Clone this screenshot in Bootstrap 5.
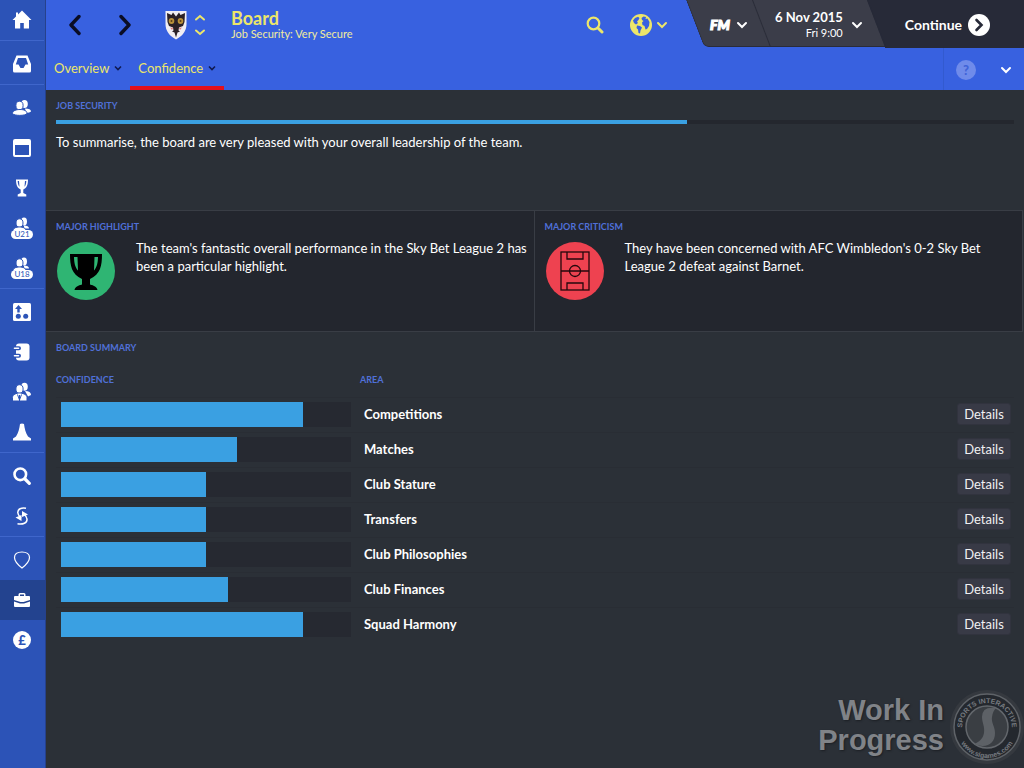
<!DOCTYPE html>
<html lang="en">
<head>
<meta charset="utf-8">
<meta name="viewport" content="width=device-width, initial-scale=1">
<title>Board – Confidence</title>
<link href="https://cdn.jsdelivr.net/npm/bootstrap@5.3.0/dist/css/bootstrap.min.css" rel="stylesheet">
<style>
:root{--blue:#3861e0;--side:#2c53b7;--panel:#2b3037;--deep:#23262e;--line:#393d45;--label:#5070d8;--yel:#ece66a;--bar:#3aa0e2}
body{background:var(--panel);color:#fff;font-family:"Lato","Open Sans",sans-serif;font-size:13px;line-height:18px}
button{background:none;border:0;color:inherit;padding:0}
svg{display:block}
.sidebar{width:46px;padding-right:1px;background:var(--side);border-right:1px solid #26418c}
.side-group{display:flex;flex-direction:column;gap:6px;padding:6px 0 3px;border-bottom:1px solid #3f66cb}
.side-group:first-child{padding-top:3px}
.side-group:last-child{border:0}
.side-item{height:34px;display:flex;align-items:center;justify-content:center;color:#fff}
.side-item.active{height:40px;margin:-3px -1px -3px 0;padding-right:1px;background:#23438f}
.masthead{background:var(--blue)}
.topbar{height:48px}
.nav-block{padding:2px 0 0 23px}
.forward{margin-left:38px}
.crest{margin:0 7px 0 34px}
.club-name{padding-left:25px;padding-bottom:2px}
.club-title{font-size:18px;line-height:20px;font-weight:700;color:var(--yel);margin:0}
.club-sub{font-size:11px;line-height:12px;color:#f1ec9c;margin:0}
.finders{gap:26px;margin-right:18px;padding-top:2px}
.segment{position:relative;height:47px;isolation:isolate;display:flex;align-items:center;padding-top:2px}
.segment::before{content:"";position:absolute;z-index:-1;top:0;bottom:0;left:0;right:-30px;background:#3b3d49;border-left:1px solid #2a2c38;border-bottom:1px solid #2a2c38;transform:skewX(21deg);transform-origin:top;}
.seg-fm::before{border-bottom-left-radius:5px}
.seg-fm{padding-left:23px;padding-right:4px}
.seg-date{padding-left:23px;padding-right:4px;gap:8px}
.seg-go{padding-left:38px;padding-right:34px;gap:6px;height:48px;font-size:14px;font-weight:700}
.seg-go::before{background:#272a38;border-color:#272a38;right:-60px}
.dateline{font-size:13px;font-weight:700;line-height:17px}
.timeline{font-size:11px;line-height:14px}
.tabs{height:42px}
.tabs .tab{display:flex;align-items:center;gap:5px;color:var(--yel);font-size:13px;text-decoration:none;padding:2px 8px 0;border-bottom:4px solid transparent}
.tabs .tab.current{border-color:#e3101c}
.tools{border-left:1px solid #325acf;padding-top:2px}
.cap{font-size:9px;line-height:13px;font-weight:700;color:var(--label);margin:0;text-transform:uppercase}
.security{height:120px;padding:9px 10px}
.security .progress{height:4px;margin:8px 0 9px;border-radius:0;background:#24272e}
.progress-bar{background:var(--bar)}
.verdicts{background:var(--deep);border:1px solid var(--line);border-left:0;margin-right:1px}
.verdict{min-height:120px;padding:9px 0 9px 10px;flex:1 1 0;min-width:0}
.verdict+.verdict{border-left:1px solid var(--line)}
.verdict p{margin:0 0 0 20px;padding-top:6px}
.summary{padding:9px 10px}
.board{width:100%;table-layout:fixed}
.board th{padding:3px 0 0;height:27px;vertical-align:top}
.board td{height:35px;padding:0;vertical-align:middle}
.board td .progress{height:25px;margin:0 9px 0 5px;border-radius:0;background:#262931}
.board tbody tr{border-top:1px solid #292d34}
.board td.area{padding:0 0 2px 4px;font-weight:700}
.board td.act{padding-bottom:2px}
.col-conf{width:304px}.col-act{width:57px}
.details{display:block;background:#383a46;border:1px solid #31333e;border-radius:3px;width:54px;height:22px;line-height:18px;font-size:13px;color:#f0f0f2}
.wip{font:700 29px/30px "Liberation Sans",sans-serif;color:#808388;text-align:right;text-shadow:1px 1px 2px #1c1f24;margin:0;padding-bottom:4px}
</style>
</head>
<body>
<div class="d-flex min-vh-100">
<nav class="sidebar flex-shrink-0" aria-label="Main">
  <div class="side-group">
    <a href="#" class="side-item" aria-label="Home"><svg width="20" height="20" viewBox="0 0 20 20" fill="currentColor"><path d="M10 .5 19.500 10H17v8.500h-5.200V13H8.200v5.500H3V10H.5L4 6.500V2.500h2v2z"/></svg></a>
  </div>
  <div class="side-group">
    <a href="#" class="side-item" aria-label="Inbox"><svg width="20" height="18" viewBox="0 0 20 18"><path fill="#fff" fill-rule="evenodd" d="M4.500.5h11L19 9v7q0 1.500-1.500 1.500h-15Q1 17.500 1 16V9zM6 3 3.800 9.500h2.700L8.500 13h3l2-3.500h2.700L14 3z"/></svg></a>
  </div>
  <div class="side-group">
    <a href="#" class="side-item" aria-label="Squad"><svg width="20" height="18" viewBox="0 0 20 18"><g fill="#fff"><ellipse cx="12.500" cy="5" rx="3.300" ry="4"/><path d="M13 9.500c4 0 6 1.200 6 3-1 1-3 1.400-5 1.300z"/><g stroke="#2c53b7" stroke-width="1"><ellipse cx="7.500" cy="6.500" rx="3.600" ry="4.300"/><path d="M.5 14.500c0-3 4-4 7.500-4s7 1 7 4c-1.500 2.500-13 2.500-14.500 0z"/></g></g></svg></a>
    <a href="#" class="side-item" aria-label="Calendar"><svg width="18" height="18" viewBox="0 0 18 18"><path fill="#fff" fill-rule="evenodd" d="M2 0h14q2 0 2 2v14q0 2-2 2H2q-2 0-2-2V2q0-2 2-2zm0 6v9.500q0 .5.500.5h13q.5 0 .5-.5V6z"/></svg></a>
    <a href="#" class="side-item" aria-label="Competitions"><svg width="14" height="18" viewBox="0 0 14 18"><path fill="#fff" fill-rule="evenodd" d="M1 .5h12c0 5-1 8.500-4.700 10v3.500l3 1.500v2H2.700v-2l3-1.500v-3.500C2 9 1 5.500 1 .5zM2.700 2c.1 2.500.6 4.500 1.800 5.700L4 2zm8.600 0H10l-.5 5.700C10.700 6.500 11.200 4.500 11.300 2z"/></svg></a>
    <a href="#" class="side-item" aria-label="Under 21s"><svg width="24" height="24" viewBox="0 0 24 24"><g fill="#fff"><ellipse cx="14" cy="5.500" rx="3" ry="4"/><path d="M14 9.500c3 0 5 1 5 3h-5z"/><g stroke="#2c53b7"><ellipse cx="9.500" cy="7" rx="3.500" ry="4.200"/><path d="M3 15c0-3 3-4 6.500-4s6.500 1 6.500 4z"/></g><rect x="1" y="14" width="22" height="9" rx="4.500"/></g><text x="12" y="21" text-anchor="middle" font-size="8" fill="#2c53b7">U21</text></svg></a>
    <a href="#" class="side-item" aria-label="Under 18s"><svg width="24" height="24" viewBox="0 0 24 24"><g fill="#fff"><ellipse cx="14" cy="5.500" rx="3" ry="4"/><path d="M14 9.500c3 0 5 1 5 3h-5z"/><g stroke="#2c53b7"><ellipse cx="9.500" cy="7" rx="3.500" ry="4.200"/><path d="M3 15c0-3 3-4 6.500-4s6.500 1 6.500 4z"/></g><rect x="1" y="14" width="22" height="9" rx="4.500"/></g><text x="12" y="21" text-anchor="middle" font-size="8" fill="#2c53b7">U18</text></svg></a>
  </div>
  <div class="side-group">
    <a href="#" class="side-item" aria-label="Tactics"><svg width="18" height="18" viewBox="0 0 18 18"><rect width="18" height="18" rx="1.500" fill="#fff"/><g fill="#2c53b7"><path d="M5.500 2 9 6H6.700v3.500H4.300V6H2z"/><circle cx="5.300" cy="13.300" r="2.500"/><circle cx="12.700" cy="13.300" r="2.500"/></g></svg></a>
    <a href="#" class="side-item" aria-label="Notebook"><svg width="18" height="18" viewBox="0 0 18 18"><rect x="3" y=".5" width="13.500" height="17" rx="3" fill="#fff"/><path d="M1.500 5.200h4.500M1.500 12.800h4.500" stroke="#2c53b7" stroke-width="4" stroke-linecap="round"/><path d="M1.500 5.200h4M1.500 12.800h4" stroke="#fff" stroke-width="1.600" stroke-linecap="round"/></svg></a>
    <a href="#" class="side-item" aria-label="Staff"><svg width="20" height="20" viewBox="0 0 20 20"><g fill="#fff"><ellipse cx="12.500" cy="4.800" rx="3.300" ry="4"/><path d="M13 9c4 0 6 1.500 6 4l-3 1.500z"/><g stroke="#2c53b7"><ellipse cx="7.500" cy="7" rx="3.600" ry="4.300"/><path d="M.5 19v-3.500c0-3 4-4.500 7-4.500s7.500 1.500 7.500 4.500V19z"/></g></g><path d="m5.500 12.500 2 5.500 2-5.500M7.500 13v6" stroke="#2c53b7" stroke-width="1" fill="none"/></svg></a>
    <a href="#" class="side-item" aria-label="Training"><svg width="18" height="18" viewBox="0 0 18 18"><path fill="#fff" d="M7 1q2-1 4 0c.5 4.500 1.800 9 4 12.500L18 15.500V17.500H0v-2l3-2C5.200 10 6.500 5.500 7 1z"/></svg></a>
  </div>
  <div class="side-group">
    <a href="#" class="side-item" aria-label="Scouting"><svg width="18" height="18" viewBox="0 0 18 18" fill="none" stroke="#fff"><circle cx="7.300" cy="7.300" r="5.800" stroke-width="2.600"/><path d="m12 12 4.300 4.300" stroke-width="3.200" stroke-linecap="round"/></svg></a>
    <a href="#" class="side-item" aria-label="Transfers"><svg width="14" height="18" viewBox="0 0 14 18" fill="none" stroke="#fff" stroke-width="1.500"><path d="M11 1.200C6.500.3 2.500 2 2.800 5.800 3 8.300 4.500 9.500 6 11"/><path d="M2.500 16.800C8 17.700 12.300 16 12 12c-.2-2.200-1.500-3.500-3-5"/><path d="M.5 10.500 6.500 14V8zM13 7.500 7 4v6z" fill="#fff" stroke="none"/></svg></a>
  </div>
  <div class="side-group">
    <a href="#" class="side-item" aria-label="Club"><svg width="18" height="18" viewBox="0 0 18 18"><path fill="none" stroke="#fff" stroke-width="1.200" d="M9 17C4.500 13.500 1.500 10 1.500 6.500 1.500 3 4.500 1 9 1s7.500 2 7.500 5.500C16.500 10 13.500 13.500 9 17z"/></svg></a>
    <a href="#" class="side-item active" aria-label="Board"><svg width="16" height="14" viewBox="0 0 16 14"><path fill="#fff" fill-rule="evenodd" d="M4.500 3V1.500Q4.500 0 6 0h4q1.500 0 1.500 1.500V3H15q1 0 1 1v3L9.500 9h-3L0 7V4q0-1 1-1zM6 3h4V1.500H6zM0 8.500l6 2h4l6-2V13q0 1-1 1H1q-1 0-1-1z"/></svg></a>
    <a href="#" class="side-item" aria-label="Finances"><svg width="18" height="18" viewBox="0 0 18 18"><circle cx="9" cy="9" r="9" fill="#fff"/><text x="9" y="13.500" text-anchor="middle" font-size="13" font-weight="900" fill="#2c53b7">£</text></svg></a>
  </div>
</nav>

<div class="flex-grow-1 d-flex flex-column overflow-hidden">
  <header class="masthead">
    <div class="topbar d-flex align-items-start overflow-hidden">
      <div class="nav-block d-flex align-items-center h-100">
        <button aria-label="Back"><svg width="12" height="22" viewBox="0 0 12 22" fill="none" stroke="#0a0d24" stroke-width="3.400" stroke-linecap="round" stroke-linejoin="round"><path d="M10 2.500 2 11l8 8.500"/></svg></button>
        <button class="forward" aria-label="Forward"><svg width="12" height="22" viewBox="0 0 12 22" fill="none" stroke="#0a0d24" stroke-width="3.400" stroke-linecap="round" stroke-linejoin="round"><path d="m2 2.500 8 8.500-8 8.500"/></svg></button>
        <svg class="crest" width="22" height="30" viewBox="0 0 22 30" role="img" aria-label="Club crest"><path d="M.5 1h21v13c0 7-4 12-10.500 15.500C4.500 26 .5 21 .5 14z" fill="#f1eef3"/><path d="M2 3 6.500 5 8 2.500l3 4 3-4L15.500 5 20 3l-.5 9-1.500 4-4 1.500-.5 3 1.500 1-2.500 1L11 27.500 9.500 22.500 7 21.500l1.500-1-.5-3L4 16l-1.500-4z" fill="#2a2026"/><ellipse cx="6.500" cy="11" rx="2.800" ry="3" fill="#b9913a"/><ellipse cx="15.500" cy="11" rx="2.800" ry="3" fill="#b9913a"/><circle cx="6.500" cy="11" r="1" fill="#5a3f1c"/><circle cx="15.500" cy="11" r="1" fill="#5a3f1c"/><path d="M5 17.500l3 .5-1 2zM17 17.500l-3 .5 1 2z" fill="#e07a78"/></svg>
        <button aria-label="Switch club"><svg width="12" height="22" viewBox="0 0 12 22" fill="none" stroke="#ece66a" stroke-width="2" stroke-linecap="round"><path d="M2 5.500 6 2l4 3.500M2 16.500 6 20l4-3.500"/></svg></button>
        <div class="club-name">
          <h1 class="club-title">Board</h1>
          <p class="club-sub">Job Security: Very Secure</p>
        </div>
      </div>
      <div class="finders d-flex align-items-center h-100 ms-auto">
        <button aria-label="Search"><svg width="18" height="18" viewBox="0 0 18 18" fill="none" stroke="#ece66a"><circle cx="7.500" cy="7.500" r="5.800" stroke-width="2.200"/><path d="m12.500 12.500 3.500 3.500" stroke-width="3" stroke-linecap="round"/></svg></button>
        <button class="d-flex align-items-center gap-1" aria-label="World"><svg width="22" height="22" viewBox="0 0 22 22"><circle cx="11" cy="11" r="11" fill="#ece66a"/><path fill="#3861e0" d="M3 6.500 5 4l3-1.200 1.500 1.200L8.500 6 7 7.500 8 9l-2 1.500L4 9zM11.500 4 13.500 2.500 16 3l-.5 2 2-.5 2 3.500-.5 4-2 3-1.500.5-1-3.500-2-1-.5-2.500 1.500-1.500-1.500-1zM7 11.500l3 .5 2 1.500-1.500 3-.5 3-1.500-.5-.5-3.500L6.500 14z"/></svg><svg width="12" height="8" viewBox="0 0 12 8" fill="none" stroke="#ece66a" stroke-width="2" stroke-linecap="round"><path d="m2 2 4 4 4-4"/></svg></button>
      </div>
      <button class="segment seg-fm" aria-label="FM menu"><svg width="27" height="18" viewBox="0 0 27 18"><text x="1" y="14" font-family="Lato" font-size="14" font-style="italic" font-weight="900" fill="#fff" stroke="#fff" stroke-width="1.200">FM</text></svg><svg width="12" height="8" viewBox="0 0 12 8" fill="none" stroke="#fff" stroke-width="2" stroke-linecap="round"><path d="m2 2 4 4 4-4"/></svg></button>
      <button class="segment seg-date"><span class="text-end"><span class="d-block dateline">6 Nov 2015</span><span class="d-block timeline">Fri 9:00</span></span><svg width="12" height="8" viewBox="0 0 12 8" fill="none" stroke="#fff" stroke-width="2" stroke-linecap="round"><path d="m2 2 4 4 4-4"/></svg></button>
      <button class="segment seg-go"><span>Continue</span><svg width="22" height="22" viewBox="0 0 22 22"><circle cx="11" cy="11" r="11" fill="#fff"/><path d="m8.500 6 5 5-5 5" fill="none" stroke="#272a38" stroke-width="2.600" stroke-linecap="round"/></svg></button>
    </div>
    <div class="tabs d-flex">
      <a href="#" class="tab">Overview <svg width="8" height="6" viewBox="0 0 8 6" fill="none" stroke="#101a50" stroke-width="1.600"><path d="m1 1.500 3 3 3-3"/></svg></a>
      <a href="#" class="tab current">Confidence <svg width="8" height="6" viewBox="0 0 8 6" fill="none" stroke="#101a50" stroke-width="1.600"><path d="m1 1.500 3 3 3-3"/></svg></a>
      <div class="tools ms-auto d-flex align-items-center ps-2 gap-4">
        <button class="ms-1" aria-label="Help"><svg width="20" height="20" viewBox="0 0 20 20"><circle cx="10" cy="10" r="10" fill="#6f8bea"/><text x="10" y="14.500" text-anchor="middle" font-size="13" font-weight="900" fill="#3f63d8">?</text></svg></button>
        <button class="me-2 pe-1" aria-label="More"><svg width="12" height="8" viewBox="0 0 12 8" fill="none" stroke="#fff" stroke-width="2" stroke-linecap="round"><path d="m2 2 4 4 4-4"/></svg></button>
      </div>
    </div>
  </header>

  <main>
    <section class="security">
      <h2 class="cap">Job Security</h2>
      <div class="progress"><div class="progress-bar" style="width:65.9%"></div></div>
      <p class="m-0">To summarise, the board are very pleased with your overall leadership of the team.</p>
    </section>
    <section class="verdicts d-flex">
      <div class="verdict">
        <h2 class="cap">Major Highlight</h2>
        <div class="d-flex">
          <svg class="flex-shrink-0 mt-2" width="60" height="60" viewBox="0 0 60 60"><circle cx="30" cy="30" r="29" fill="#2fb573"/><path fill="#000" fill-rule="evenodd" d="M14 13h32c0 12-1.500 20-12 25v5.500c4 1 7 2.500 7.500 5.500h-23c.5-3 3.500-4.500 7.500-5.500V38C15.500 33 14 25 14 13zm4 3c.2 6 1 10 4 13.500L21.500 16zm24 0h-3.500L38 29.500c3-3.500 3.800-7.500 4-13.500z"/></svg>
          <p>The team's fantastic overall performance in the Sky Bet League 2 has been a particular highlight.</p>
        </div>
      </div>
      <div class="verdict">
        <h2 class="cap">Major Criticism</h2>
        <div class="d-flex">
          <svg class="flex-shrink-0 mt-2" width="60" height="60" viewBox="0 0 60 60"><circle cx="30" cy="30" r="29" fill="#ee4250"/><g fill="none" stroke="#24080c" stroke-width="1.300"><rect x="16" y="11" width="28" height="38"/><path d="M16 30h28M22 11v7h16v-7M22 49v-7h16v7"/><circle cx="30" cy="30" r="5.500"/></g></svg>
          <p>They have been concerned with AFC Wimbledon's 0-2 Sky Bet League 2 defeat against Barnet.</p>
        </div>
      </div>
    </section>
    <section class="summary">
      <h2 class="cap mb-3">Board Summary</h2>
      <table class="board">
        <colgroup><col class="col-conf"><col><col class="col-act"></colgroup>
        <thead><tr><th class="cap">Confidence</th><th class="cap">Area</th><th></th></tr></thead>
        <tbody>
          <tr><td><div class="progress"><div class="progress-bar" style="width:83.4%"></div></div></td><td class="area">Competitions</td><td class="act"><button class="details">Details</button></td></tr>
          <tr><td><div class="progress"><div class="progress-bar" style="width:60.7%"></div></div></td><td class="area">Matches</td><td class="act"><button class="details">Details</button></td></tr>
          <tr><td><div class="progress"><div class="progress-bar" style="width:50%"></div></div></td><td class="area">Club Stature</td><td class="act"><button class="details">Details</button></td></tr>
          <tr><td><div class="progress"><div class="progress-bar" style="width:50%"></div></div></td><td class="area">Transfers</td><td class="act"><button class="details">Details</button></td></tr>
          <tr><td><div class="progress"><div class="progress-bar" style="width:50%"></div></div></td><td class="area">Club Philosophies</td><td class="act"><button class="details">Details</button></td></tr>
          <tr><td><div class="progress"><div class="progress-bar" style="width:57.6%"></div></div></td><td class="area">Club Finances</td><td class="act"><button class="details">Details</button></td></tr>
          <tr><td><div class="progress"><div class="progress-bar" style="width:83.4%"></div></div></td><td class="area">Squad Harmony</td><td class="act"><button class="details">Details</button></td></tr>
        </tbody>
      </table>
    </section>
  </main>
  <footer class="mt-auto d-flex justify-content-end align-items-center gap-1">
    <p class="wip">Work In<br>Progress</p>
    <svg width="76" height="82" viewBox="0 0 76 82" role="img" aria-label="Sports Interactive">
      <circle cx="39" cy="41" r="37" fill="#35393f"/><circle cx="39" cy="41" r="33" fill="#24282e" stroke="#5f6368" stroke-width="1.500"/><circle cx="39" cy="41" r="21" fill="#3a3e43" stroke="#63676c" stroke-width="1.500"/>
      <path d="M48 22q-14-2-14 9c0 6 3 9 2 16-1 6-5 9-10 11 12 5 21 0 21-11 0-7-4-10-3-16 .5-4 2-7 4-9z" fill="#5d6166"/>
      <defs><path id="arc-top" d="M17 54A25 25 0 1 1 61 54"/><path id="arc-low" d="M9 42a30 30 0 0 0 60 0"/></defs>
      <g font-family="Liberation Sans" font-weight="700" fill="#777b80" text-anchor="middle"><text font-size="7"><textPath href="#arc-top" startOffset="50%">SPORTS INTERACTIVE</textPath></text><text font-size="7"><textPath href="#arc-low" startOffset="50%">www.sigames.com</textPath></text></g>
    </svg>
  </footer>
</div>
</div>
<script src="https://cdn.jsdelivr.net/npm/bootstrap@5.3.0/dist/js/bootstrap.bundle.min.js"></script>
</body>
</html>
